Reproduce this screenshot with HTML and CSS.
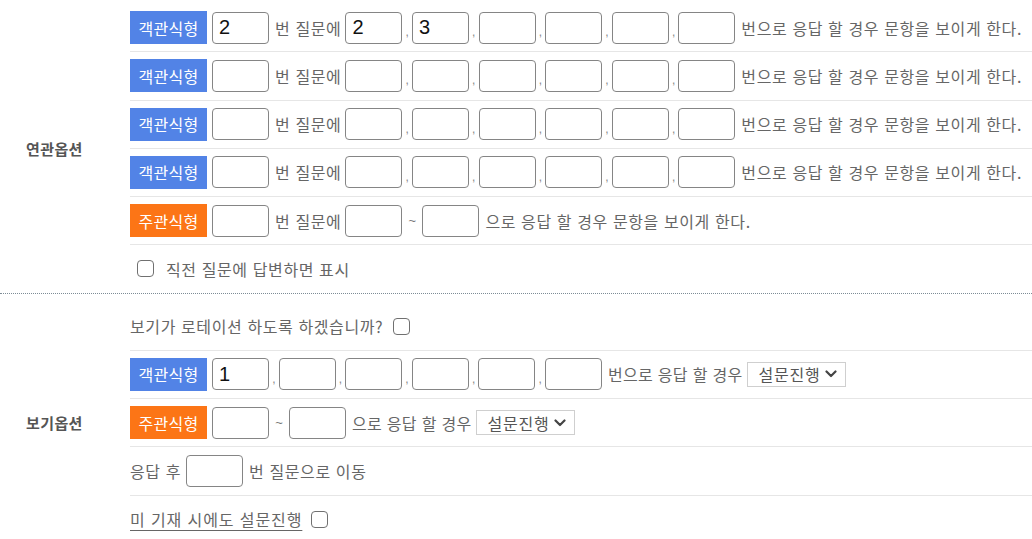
FILE: index.html
```html
<!DOCTYPE html>
<html lang="ko">
<head>
<meta charset="utf-8">
<title>옵션</title>
<link rel="stylesheet" href="styles.css">
</head>
<body>
<div class="page">
  <section class="group group-first">
    <div class="group-label">연관옵션</div>
    <div class="group-body">
      <div class="row">
        <span class="badge badge-blue">객관식형</span>
        <input class="box" type="text" value="2">
        <span class="txt">번 질문에</span>
        <input class="box" type="text" value="2"><span class="comma">,</span>
        <input class="box" type="text" value="3"><span class="comma">,</span>
        <input class="box" type="text"><span class="comma">,</span>
        <input class="box" type="text"><span class="comma">,</span>
        <input class="box" type="text"><span class="comma">,</span>
        <input class="box" type="text">
        <span class="txt">번으로 응답 할 경우 문항을 보이게 한다.</span>
      </div>
      <div class="row">
        <span class="badge badge-blue">객관식형</span>
        <input class="box" type="text">
        <span class="txt">번 질문에</span>
        <input class="box" type="text"><span class="comma">,</span>
        <input class="box" type="text"><span class="comma">,</span>
        <input class="box" type="text"><span class="comma">,</span>
        <input class="box" type="text"><span class="comma">,</span>
        <input class="box" type="text"><span class="comma">,</span>
        <input class="box" type="text">
        <span class="txt">번으로 응답 할 경우 문항을 보이게 한다.</span>
      </div>
      <div class="row">
        <span class="badge badge-blue">객관식형</span>
        <input class="box" type="text">
        <span class="txt">번 질문에</span>
        <input class="box" type="text"><span class="comma">,</span>
        <input class="box" type="text"><span class="comma">,</span>
        <input class="box" type="text"><span class="comma">,</span>
        <input class="box" type="text"><span class="comma">,</span>
        <input class="box" type="text"><span class="comma">,</span>
        <input class="box" type="text">
        <span class="txt">번으로 응답 할 경우 문항을 보이게 한다.</span>
      </div>
      <div class="row">
        <span class="badge badge-blue">객관식형</span>
        <input class="box" type="text">
        <span class="txt">번 질문에</span>
        <input class="box" type="text"><span class="comma">,</span>
        <input class="box" type="text"><span class="comma">,</span>
        <input class="box" type="text"><span class="comma">,</span>
        <input class="box" type="text"><span class="comma">,</span>
        <input class="box" type="text"><span class="comma">,</span>
        <input class="box" type="text">
        <span class="txt">번으로 응답 할 경우 문항을 보이게 한다.</span>
      </div>
      <div class="row">
        <span class="badge badge-orange">주관식형</span>
        <input class="box" type="text">
        <span class="txt">번 질문에</span>
        <input class="box" type="text"><span class="tilde">~</span>
        <input class="box" type="text">
        <span class="txt">으로 응답 할 경우 문항을 보이게 한다.</span>
      </div>
      <div class="row row-last">
        <label class="check-line">
          <input class="check" type="checkbox">
          <span class="txt">직전 질문에 답변하면 표시</span>
        </label>
      </div>
    </div>
  </section>

  <section class="group group-second">
    <div class="group-label">보기옵션</div>
    <div class="group-body">
      <div class="row row-text">
        <span class="txt txt-first">보기가 로테이션 하도록 하겠습니까?</span>
        <input class="check check-after" type="checkbox">
      </div>
      <div class="row">
        <span class="badge badge-blue">객관식형</span>
        <input class="box" type="text" value="1"><span class="comma">,</span>
        <input class="box" type="text"><span class="comma">,</span>
        <input class="box" type="text"><span class="comma">,</span>
        <input class="box" type="text"><span class="comma">,</span>
        <input class="box" type="text"><span class="comma">,</span>
        <input class="box" type="text">
        <span class="txt txt-tight">번으로 응답 할 경우</span>
        <span class="select"><span>설문진행</span><svg class="chev" viewBox="0 0 12 8" width="12" height="8"><path d="M1.5 1.5 L6 6 L10.5 1.5" fill="none" stroke="#444" stroke-width="2.2" stroke-linecap="round" stroke-linejoin="round"/></svg></span>
      </div>
      <div class="row">
        <span class="badge badge-orange">주관식형</span>
        <input class="box" type="text"><span class="tilde">~</span>
        <input class="box" type="text">
        <span class="txt txt-tight">으로 응답 할 경우</span>
        <span class="select"><span>설문진행</span><svg class="chev" viewBox="0 0 12 8" width="12" height="8"><path d="M1.5 1.5 L6 6 L10.5 1.5" fill="none" stroke="#444" stroke-width="2.2" stroke-linecap="round" stroke-linejoin="round"/></svg></span>
      </div>
      <div class="row">
        <span class="txt txt-first">응답 후</span>
        <input class="box" type="text">
        <span class="txt">번 질문으로 이동</span>
      </div>
      <div class="row row-last">
        <span class="txt txt-first underline">미 기재 시에도 설문진행</span>
        <input class="check check-after2" type="checkbox">
      </div>
    </div>
  </section>
</div>
</body>
</html>
```

FILE: styles.css
```css
html, body {
  margin: 0;
  padding: 0;
  background: #ffffff;
}

body {
  font-family: "Noto Sans CJK KR", "Noto Sans", sans-serif;
  color: #666666;
  font-size: 16px;
}

.page {
  width: 1032px;
}

.group {
  display: flex;
}

.group-first {
  padding-top: 4px;
  border-bottom: 1px dotted #7d8c96;
}

.group-second {
  padding-top: 9px;
}

.group-label {
  width: 130px;
  flex: 0 0 130px;
  box-sizing: border-box;
  padding-left: 26px;
  display: flex;
  align-items: center;
  font-weight: bold;
  font-size: 15px;
  letter-spacing: 0.4px;
  color: #555555;
}

.group-body {
  flex: 1;
}

.row {
  display: flex;
  align-items: center;
  height: 33px;
  padding: 7px 0 7.25px 0;
  border-bottom: 1px solid #e6e6e6;
  white-space: nowrap;
}

.row-last {
  border-bottom: none;
}

.badge {
  display: inline-flex;
  align-items: center;
  justify-content: center;
  width: 77px;
  height: 33px;
  color: #ffffff;
  font-size: 16px;
  letter-spacing: 0.3px;
  line-height: 1;
  margin-right: 5px;
}

.badge-blue {
  background: #5283e6;
}

.badge-orange {
  background: #fc7516;
}

.box {
  box-sizing: border-box;
  width: 57px;
  height: 32px;
  border: 1px solid #858585;
  border-radius: 4px;
  padding: 0 6px;
  margin: 0;
  font-family: "Liberation Sans", Arial, sans-serif;
  font-size: 20px;
  color: #111111;
  background: #ffffff;
  outline: none;
}

.txt {
  line-height: 1;
  font-size: 16px;
  letter-spacing: 0.6px;
  color: #666666;
  margin: 0 4px 0 6px;
}

.txt-first {
  margin-left: 0;
  margin-right: 5px;
}

.txt-tight {
  letter-spacing: 0.3px;
  margin-right: 3px;
}

.underline {
  text-decoration: underline;
  text-underline-offset: 4px;
  letter-spacing: 0.9px;
  margin-right: 9px;
}

.comma {
  display: inline-block;
  width: 9.6px;
  text-align: center;
  font-family: "Liberation Sans", Arial, sans-serif;
  font-size: 12px;
  color: #888888;
  align-self: flex-end;
  padding-bottom: 5px;
}

.tilde {
  display: inline-block;
  width: 20px;
  text-align: center;
  font-family: "Liberation Sans", Arial, sans-serif;
  font-size: 13px;
  color: #777777;
}

.check {
  appearance: none;
  -webkit-appearance: none;
  box-sizing: border-box;
  width: 17px;
  height: 17px;
  border: 1.5px solid #707070;
  border-radius: 4px;
  margin: 0;
  background: #ffffff;
}

.check-line {
  display: flex;
  align-items: center;
  padding-left: 7px;
}

.check-line .txt {
  margin-left: 12px;
}

.check-after {
  margin-left: 5px;
}

.check-after2 {
  margin-left: 0;
}

.select {
  display: inline-flex;
  align-items: center;
  box-sizing: border-box;
  height: 25px;
  padding: 0 8px 0 10px;
  border: 1px solid #cfcfcf;
  font-size: 16px;
  letter-spacing: 0.8px;
  color: #555555;
  line-height: 1;
  margin-left: 2px;
  gap: 4px;
}

.chev {
  display: block;
}
```
